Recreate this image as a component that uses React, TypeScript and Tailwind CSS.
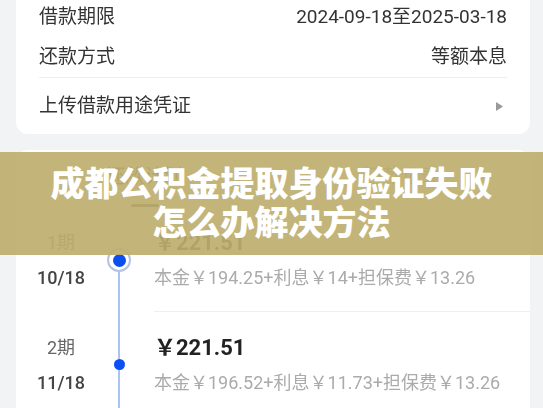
import React from "react";

type Period = {
    label: string;
    date: string;
    amount: string;
    detail: string;
    current?: boolean;
};

const periods: Period[] = [
    {
        label: "1期",
        date: "10/18",
        amount: "￥221.51",
        detail: "本金￥194.25+利息￥14+担保费￥13.26",
        current: true,
    },
    {
        label: "2期",
        date: "11/18",
        amount: "￥221.51",
        detail: "本金￥196.52+利息￥11.73+担保费￥13.26",
    },
];

const font = "font-['Roboto','Noto_Sans_CJK_SC',sans-serif]";

const InfoRow = ({ label, value }: { label: string; value: string }) => (
    <div className="flex h-[40px] items-center justify-between text-[19px] text-[#333]">
        <span>{label}</span>
        <span>{value}</span>
    </div>
);

const PeriodRow = ({ item }: { item: Period }) => (
    <div className="flex">
        <div className="flex w-[90px] flex-col items-center pt-[25px]">
            <span className="text-[18px] leading-[22px] text-[#666]">{item.label}</span>
            <span className="mt-[13px] text-[18px] font-medium leading-[22px] text-[#444]">
                {item.date}
            </span>
        </div>
        <div className="flex w-[26px] flex-col items-center">
            {item.current ? (
                <>
                    <div className="h-[41px]" />
                    <div className="flex h-[24px] w-[24px] items-center justify-center rounded-full border-2 border-[#b4c3e2] bg-white">
                        <div className="h-[13px] w-[13px] rounded-full bg-[#0b4ff2]" />
                    </div>
                </>
            ) : (
                <>
                    <div className="h-[47px] w-[2px] bg-[#a9c3f2]" />
                    <div className="h-[11px] w-[11px] rounded-full bg-[#0b4ff2]" />
                </>
            )}
            <div className="w-[2px] flex-1 bg-[#a9c3f2]" />
        </div>
        <div className="ml-[22px] flex-1 border-b border-[#eeeeee] pb-[22px] pt-[25px]">
            <div className="text-[22px] font-bold leading-[22px] text-[#222]">{item.amount}</div>
            <div className="mt-[13px] text-[18px] leading-[22px] text-[#ababab]">{item.detail}</div>
        </div>
    </div>
);

export default function App() {
    return (
        <div className={`relative h-[408px] w-[543px] overflow-hidden bg-[#f2f3f5] ${font}`}>
            <div className="-mt-[23px] ml-[16px] mr-[13px] rounded-xl bg-white px-[23px] pt-[20px] blur-[0.4px]">
                <InfoRow label="借款期限" value="2024-09-18至2025-03-18" />
                <InfoRow label="还款方式" value="等额本息" />
                <div className="h-px bg-[#eeeeee]" />
                <div className="flex h-[56px] items-center justify-between text-[19px] text-[#333]">
                    <span>上传借款用途凭证</span>
                    <svg width="7" height="9" viewBox="0 0 7 9" className="mr-[4px]">
                        <polygon points="0,0 7,4.5 0,9" fill="#9a9a9a" />
                    </svg>
                </div>
            </div>

            <div className="ml-[16px] mr-[13px] mt-[16px] rounded-t-xl bg-white blur-[0.4px]">
                <div className="flex h-[57px]">
                    <div className="flex flex-1 flex-col items-center justify-between pt-[15px]">
                        <span className="text-[19px] leading-[24px] text-[#333]">还款计划</span>
                        <div className="h-[3px] w-[28px] rounded-full bg-[#444]" />
                    </div>
                    <div className="flex flex-1 flex-col items-center pt-[15px]">
                        <span className="text-[19px] leading-[24px] text-[#999]">还款记录</span>
                    </div>
                </div>
                {periods.map((p) => (
                    <PeriodRow key={p.label} item={p} />
                ))}
            </div>

            <div className="absolute left-0 right-0 top-[152px] flex h-[103px] items-center justify-center bg-[#beaf6e]/92">
                <p className="text-center text-[34px] font-black leading-[39px] text-white">
                    成都公积金提取身份验证失败
                    <br />
                    怎么办解决方法
                </p>
            </div>
        </div>
    );
}
